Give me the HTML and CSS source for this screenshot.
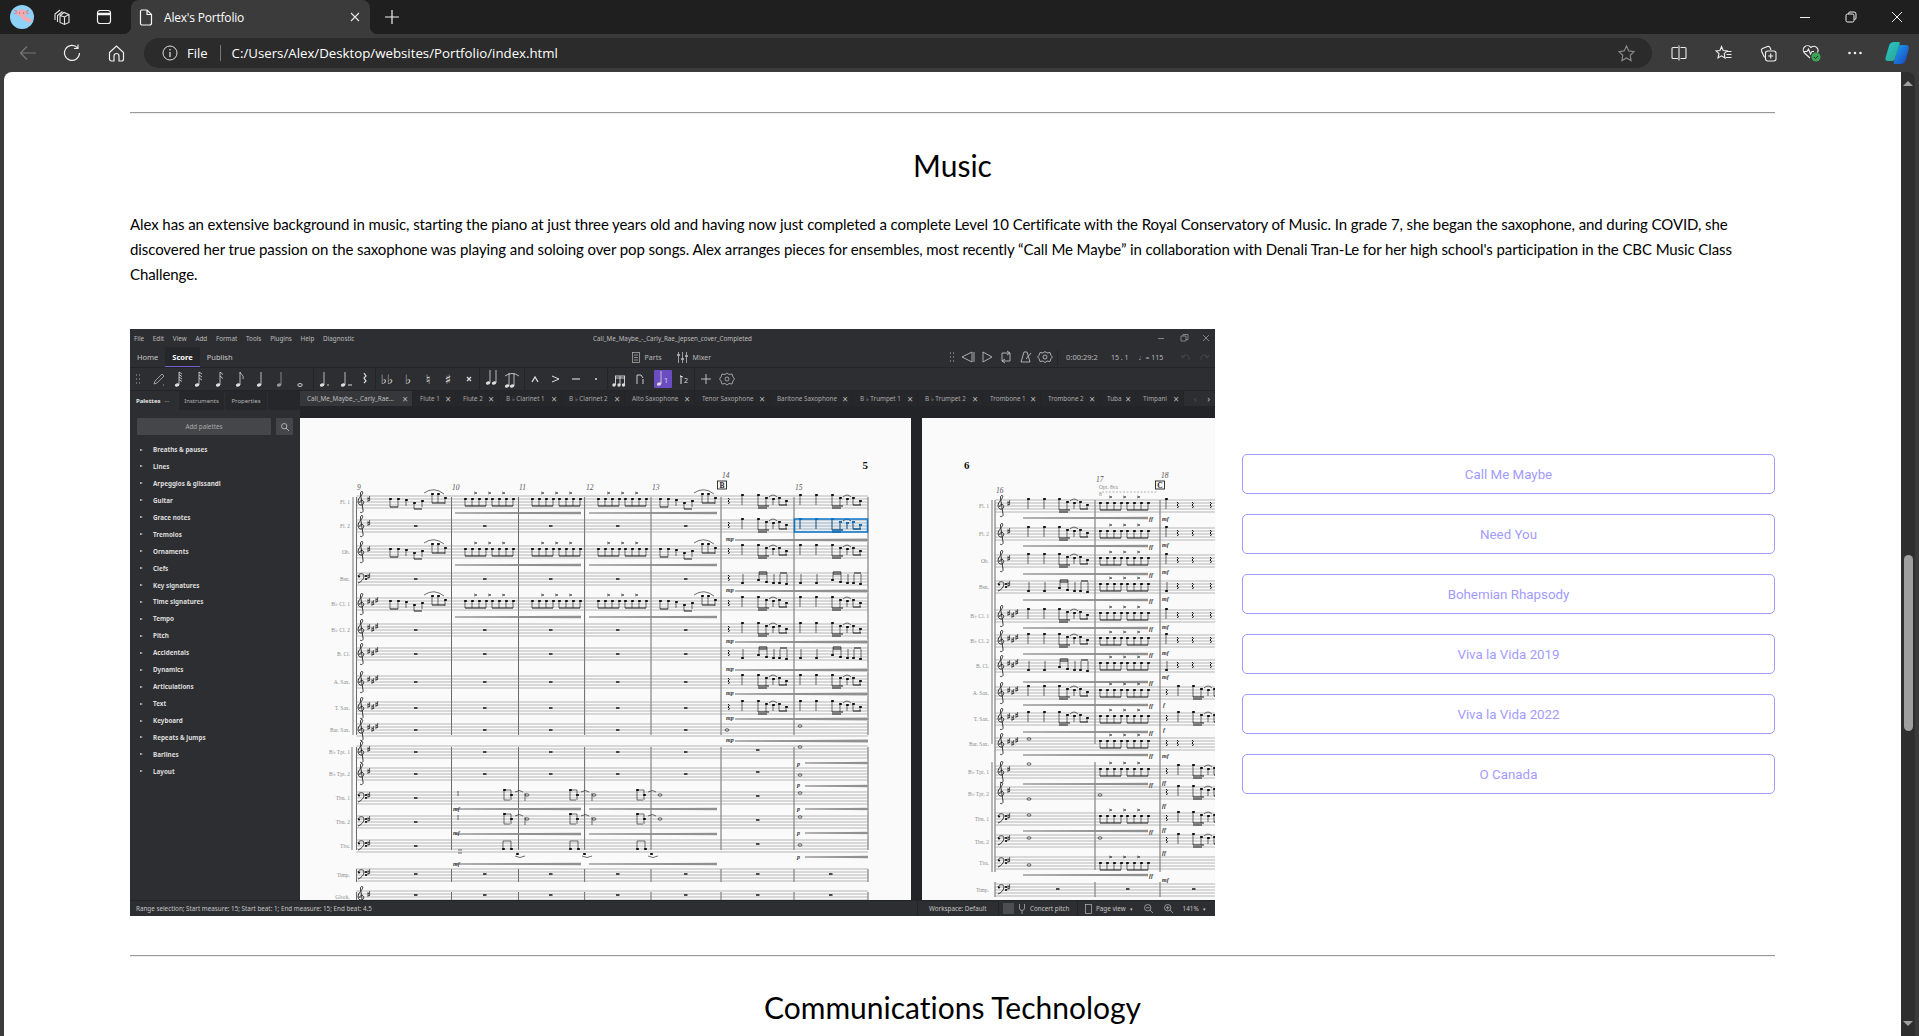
FILE: index.html
```html
<!DOCTYPE html>
<html lang="en">
<head>
    <meta charset="UTF-8">
    <meta name="viewport" content="width=device-width, initial-scale=1.0">
    <title>Alex's Portfolio</title>
    <link rel="stylesheet" href="styles.css">
</head>
<body>

<!-- browser tab strip -->
<div class="tabstrip">
    <svg class="avatar" width="24" height="24" viewBox="0 0 24 24">
        <circle cx="12" cy="12" r="12" fill="#8ed1f6"/>
        <path d="M11 8Q13 14 19.500 15.500" fill="none" stroke="#f2aab0" stroke-width="4" stroke-linecap="round"/>
        <ellipse cx="11.500" cy="8" rx="5" ry="3.500" fill="#f2aab0"/>
        <path d="M4.500 5l2.500 2M4 8.500l3-.5M18.500 5L16 7M19 8.500l-3-.5" stroke="#d9808e" stroke-width="1.200" fill="none"/>
        <path d="M9.500 8h.1M13.500 8h.1" stroke="#8a4a55" stroke-width="1.200" stroke-linecap="round"/>
    </svg>
    <svg class="ticon t-coll" width="18" height="18" viewBox="0 0 18 18" fill="none" stroke="#e6e6e6" stroke-width="1.100">
        <path d="M2 12V6l5-4M4.500 14V7.500l5-4M7 7.500l4-3 5 2v8l-4.500 2L7 14.500z M7 7.500l4.500 1.500 4.500-2.500M11.500 9v7"/>
    </svg>
    <svg class="ticon t-vert" width="16" height="16" viewBox="0 0 16 16" fill="none" stroke="#f2f2f2" stroke-width="1.200">
        <rect x="1.500" y="1.500" width="13" height="13" rx="2.500"/>
        <path d="M1.500 5h13" stroke-width="2.500"/>
    </svg>
    <div class="tab">
        <svg width="14" height="17" viewBox="0 0 14 17" fill="none" stroke="#f5f5f5" stroke-width="1.200">
            <path d="M2.500 1h5.500l4.500 4.500V14a2 2 0 0 1-2 2h-8a2 2 0 0 1-1-1.500V2.500A1.500 1.500 0 0 1 2.500 1zM8 1v4.500h4.500"/>
        </svg>
        <span class="tab-title">Alex's Portfolio</span>
        <svg class="tab-close" width="10" height="10" viewBox="0 0 10 10" stroke="#e8e8e8" stroke-width="1.100"><path d="M1 1l8 8M9 1l-8 8"/></svg>
    </div>
    <svg class="t-new" width="14" height="14" viewBox="0 0 14 14" stroke="#f2f2f2" stroke-width="1.200"><path d="M7 0v14M0 7h14"/></svg>
    <div class="winbtns">
        <svg width="12" height="12" viewBox="0 0 12 12" stroke="#eee" fill="none"><path d="M1 6.500h10"/></svg>
        <svg width="12" height="12" viewBox="0 0 12 12" stroke="#eee" fill="none"><rect x="1" y="3" width="8" height="8" rx="1.500"/><path d="M3.500 3V2.500A1.500 1.500 0 0 1 5 1h4a2 2 0 0 1 2 2v4a1.500 1.500 0 0 1-1.500 1.500H9"/></svg>
        <svg width="12" height="12" viewBox="0 0 12 12" stroke="#eee" fill="none"><path d="M1 1l10 10M11 1L1 11"/></svg>
    </div>
</div>

<!-- address bar -->
<div class="toolbar">
    <svg class="nav-back" width="18" height="16" viewBox="0 0 18 16" fill="none" stroke="#777" stroke-width="1.200"><path d="M17 8H1.500M8 1.500L1.500 8 8 14.500"/></svg>
    <svg class="nav-reload" width="18" height="18" viewBox="0 0 18 18" fill="none" stroke="#eee" stroke-width="1.200"><path d="M14.500 3.800A7.500 7.500 0 1 0 16.500 9M15 .5v4h-4"/></svg>
    <svg class="nav-home" width="17" height="17" viewBox="0 0 17 17" fill="none" stroke="#eee" stroke-width="1.200"><path d="M1.500 7.500l7-6.500 7 6.500V14a2 2 0 0 1-2 2h-2.500v-5a2 2 0 0 0-5 0v5H3.500a2 2 0 0 1-2-2z"/></svg>
    <div class="addr">
        <svg width="16" height="16" viewBox="0 0 16 16" fill="none" stroke="#ddd" stroke-width="1"><circle cx="8" cy="8" r="7"/><path d="M8 7v5M8 4v1.500" stroke-width="1.300"/></svg>
        <span class="addr-file">File</span>
        <span class="addr-sep"></span>
        <span class="addr-url">C:/Users/Alex/Desktop/websites/Portfolio/index.html</span>
        <svg class="addr-star" width="17" height="17" viewBox="0 0 17 17" fill="none" stroke="#8a8a8a" stroke-width="1.100"><path d="M8.500 1l2.300 4.900 5.200.7-3.800 3.700.9 5.300-4.600-2.600-4.600 2.600.9-5.300L1 6.600l5.200-.7z"/></svg>
    </div>
    <div class="tools">
        <svg width="16" height="16" viewBox="0 0 16 16" fill="none" stroke="#eee" stroke-width="1.100"><path d="M7 2.500H2a1 1 0 0 0-1 1v9a1 1 0 0 0 1 1h5M9.500 2.500H14a1 1 0 0 1 1 1v9a1 1 0 0 1-1 1H9.500M8 .5v15"/></svg>
        <svg width="17" height="17" viewBox="0 0 17 17" fill="none" stroke="#eee" stroke-width="1.100"><path d="M6.500 1.500l1.700 4 4 .5-3 2.700.9 4.300-3.600-2.200L3 12.900 4 8.700 1 6l4-.5zM12 6.500h4.500M11.500 9.500h5M11 12.500h5.500"/></svg>
        <svg width="17" height="17" viewBox="0 0 17 17" fill="none" stroke="#eee" stroke-width="1.100"><path d="M4.500 12.500L1.500 6a2 2 0 0 1 1-2.500l5-2a2 2 0 0 1 2.500 1L11 5"/><rect x="5.500" y="6" width="10.500" height="10" rx="2.200"/><path d="M10.700 8.500v5M8.200 11h5"/></svg>
        <svg class="tool-health" width="19" height="18" viewBox="0 0 19 18"><path d="M8 14L2.500 9A4.200 4.200 0 0 1 8.500 3l.5.500.5-.5a4.200 4.200 0 0 1 6 5.500M1.500 7.500h3.500l1.500-2.500 2 5 1.500-2.500h2" fill="none" stroke="#eee" stroke-width="1.100"/><circle cx="14" cy="13" r="4.500" fill="#3aa655"/><path d="M12 13l1.500 1.500 2.500-2.500" fill="none" stroke="#223" stroke-width="1"/></svg>
        <svg class="tool-more" width="14" height="4" viewBox="0 0 14 4" fill="#eee"><circle cx="1.500" cy="2" r="1.300"/><circle cx="7" cy="2" r="1.300"/><circle cx="12.500" cy="2" r="1.300"/></svg>
        <svg class="tool-copilot" width="24" height="22" viewBox="0 0 24 22">
            <defs>
                <linearGradient id="cp1" x1="0" y1="0" x2="1" y2="1"><stop offset="0" stop-color="#27c6d8"/><stop offset="1" stop-color="#2ea37f"/></linearGradient>
                <linearGradient id="cp2" x1="0" y1="0" x2="1" y2="1"><stop offset="0" stop-color="#1aa7e8"/><stop offset="1" stop-color="#1d3fc4"/></linearGradient>
            </defs>
            <path d="M9 0h5c1 0 1 1 .6 2L10 17c-.5 1.500-1.500 2-3 2H3c-2 0-3-1-2.500-3L4 4c.7-2.500 2.500-4 5-4z" fill="url(#cp1)"/>
            <path d="M15 3h6c2 0 3.200 1.500 2.800 3.500L21 17c-.7 3-2.500 5-5 5h-6c-1.500 0-1.500-1-1-2.500L13 6c.4-1.500 1-3 2-3z" fill="url(#cp2)"/>
        </svg>
    </div>
</div>

<div class="viewport">
    <main class="page">
        <hr class="rule">
        <h2 class="sec-title">Music</h2>
        <p class="sec-text">Alex has an extensive background in music, starting the piano at just three years old and having now just completed a complete Level 10 Certificate with the Royal Conservatory of Music. In grade 7, she began the saxophone, and during COVID, she discovered her true passion on the saxophone was playing and soloing over pop songs. Alex arranges pieces for ensembles, most recently “Call Me Maybe” in collaboration with Denali Tran-Le for her high school's participation in the CBC Music Class Challenge.</p>

        <div class="music-row">
            <!-- MuseScore window -->
            <div class="ms">
                <div class="ms-title">
                    <span>File</span><span>Edit</span><span>View</span><span>Add</span><span>Format</span><span>Tools</span><span>Plugins</span><span>Help</span><span>Diagnostic</span>
                    <span class="ms-doc">Call_Me_Maybe_-_Carly_Rae_Jepsen_cover_Completed</span>
                    <svg class="ms-win" width="52" height="10" viewBox="0 0 52 10" fill="none" stroke="#999" stroke-width=".8"><path d="M0 5.500h6M23 3h5v5h-5zM25 3V1.500h5v5h-2M45 2l6 6M51 2l-6 6" /></svg>
                </div>
                <div class="ms-nav">
                    <span class="ms-navitem">Home</span>
                    <span class="ms-navitem ms-navitem-on">Score</span>
                    <span class="ms-navitem">Publish</span>
                    <svg class="ms-parts" width="8" height="11" viewBox="0 0 8 11" fill="none" stroke="#bbb" stroke-width=".7"><rect x=".5" y=".5" width="7" height="10"/><path d="M2 3h4M2 5.500h4M2 8h4"/></svg>
                    <span class="ms-navtxt">Parts</span>
                    <svg class="ms-mixer" width="11" height="11" viewBox="0 0 11 11" fill="none" stroke="#bbb" stroke-width=".8"><path d="M1.500 0v11M5.500 0v11M9.500 0v11"/><path d="M0 3h3M4 7h3M8 4h3" stroke-width="1.500"/></svg>
                    <span class="ms-navtxt">Mixer</span>
                    <svg class="ms-trans" width="112" height="14" viewBox="0 0 112 14" fill="none" stroke="#bbb" stroke-width=".9">
                        <path d="M5 3h1M8 3h1M5 7h1M8 7h1M5 11h1M8 11h1" stroke-width="1.200"/>
                        <g transform="translate(-4 0)">
                            <path d="M31 2v10L21 7zM33 2v10"/>
                            <path d="M42 2v10l9-5z"/>
                            <path d="M61 3h8v8M66 1l3 2-3 2M69 11h-8V3M64 13l-3-2 3-2"/>
                            <path d="M80 12l3-10h3l3 10zM85 9l5-6"/>
                        </g>
                        <circle cx="100" cy="7" r="2"/><path d="M100 1.500l2 1.500 3-.5 1 3 1.500 1.500-1.500 1.500-1 3-3-.5-2 1.500-2-1.500-3 .5-1-3-1.500-1.500 1.500-1.500 1-3 3 .5z"/>
                    </svg>
                    <span class="ms-vline"></span>
                    <span class="ms-navtxt ms-time">0:00:29:2</span>
                    <span class="ms-navtxt ms-pos">15 . 1</span>
                    <span class="ms-navtxt ms-tempo">♩= 115</span>
                    <svg class="ms-undo" width="28" height="10" viewBox="0 0 28 10" fill="none" stroke="#4a4b4f" stroke-width=".9"><path d="M1 5a4 4 0 0 1 7 0v3M0 3l1.500 3L4 4M27 5a4 4 0 0 0-7 0v3M28 3l-1.500 3L24 4"/></svg>
                </div>
                <svg class="ms-tools" width="1085" height="24" viewBox="130 367 1085 24">
                    <defs>
                        <g id="ico-head"><ellipse cx="0" cy="6" rx="2.200" ry="1.700" transform="rotate(-20 0 6)"/><path d="M2 6V-7" stroke="currentColor" stroke-width=".8"/></g>
                    </defs>
                    <path d="M130 367.500H1215M130 390.500H1215" stroke="#232427"/>
                    <path d="M313.500 368V390M375.500 368V390M479.500 368V390M524.500 368V390M607.500 368V390M694.500 368V390" stroke="#232427"/>
                    <g class="ti">
                        <path d="M136 375h1M139 375h1M136 379h1M139 379h1M136 383h1M139 383h1" stroke="#aaa" stroke-width="1.200"/>
                        <path d="M154 384l1-3 7-7 2 2-7 7zM163 385h1" fill="none" stroke="#bbb" stroke-width=".8"/>
                        <use href="#ico-head" x="177" y="379"/><path d="M179 372l3 2M179 374.500l3 2M179 377l3 2M179 379.500l3 2" fill="none" stroke="#ddd" stroke-width=".8"/>
                        <use href="#ico-head" x="197" y="379"/><path d="M199 372l3 2M199 375l3 2M199 378l3 2" fill="none" stroke="#ddd" stroke-width=".8"/>
                        <use href="#ico-head" x="218" y="379"/><path d="M220 372l3 2.500M220 376l3 2.500" fill="none" stroke="#ddd" stroke-width=".8"/>
                        <use href="#ico-head" x="238" y="379"/><path d="M240 372c1 3 4 3 3 7" fill="none" stroke="#ddd" stroke-width=".8"/>
                        <use href="#ico-head" x="259" y="379"/>
                        <use href="#ico-head" x="279" y="379" class="ti-dim"/>
                        <ellipse cx="300" cy="385" rx="2.200" ry="1.500" fill="none" stroke="#ddd" stroke-width=".9"/>
                        <use href="#ico-head" x="322" y="379"/><circle cx="328" cy="385" r=".8"/>
                        <use href="#ico-head" x="343" y="379"/><path d="M348 385h4" stroke="#ddd"/>
                        <path d="M364 373l2 3-2 2 2 3-2 2" fill="none" stroke="#ddd" stroke-width="1.200"/>
                    </g>
                    <g class="tg">
                        <text x="387" y="384" text-anchor="middle">♭♭</text>
                        <text x="408" y="384" text-anchor="middle">♭</text>
                        <text x="428" y="384" text-anchor="middle">♮</text>
                        <text x="448" y="384" text-anchor="middle">♯</text>
                    </g>
                    <g class="ti">
                        <path d="M467 377l4 4M471 377l-4 4" stroke="#ddd" stroke-width="1.200"/>
                        <use href="#ico-head" x="488" y="377"/><use href="#ico-head" x="494" y="377"/>
                        <path d="M505 376q7-5 14 0" fill="none" stroke="#ddd" stroke-width=".8"/>
                        <use href="#ico-head" x="507" y="376" transform="translate(0 4)"/><use href="#ico-head" x="512" y="376" transform="translate(0 4)"/>
                        <path d="M532 382l3-5 3 5" fill="none" stroke="#ddd" stroke-width="1.300"/>
                        <path d="M552 376l7 3-7 3" fill="none" stroke="#ddd" stroke-width="1"/>
                        <path d="M572 379h8" stroke="#ddd" stroke-width="1.100"/>
                        <circle cx="596" cy="379" r="1"/>
                        <path d="M615 376h10M615 378h10M615.500 376v9M620 376v9M624.500 376v9" fill="none" stroke="#ddd" stroke-width=".9"/>
                        <circle cx="614" cy="385" r="1.700"/><circle cx="619" cy="385" r="1.700"/><circle cx="623.500" cy="385" r="1.700"/>
                        <path d="M637 384v-9h4l2 3M643 384v-5" fill="none" stroke="#ddd" stroke-width=".9"/>
                        <rect x="654" y="370" width="18" height="18" rx="1" fill="#6b4cc2"/>
                        <use href="#ico-head" x="659" y="378"/><text class="tv" x="664" y="383">1</text>
                        <path d="M680 376h1v8M680 376l3 1" fill="none" stroke="#ddd" stroke-width="1"/><text class="tv" x="684" y="383">2</text>
                        <path d="M706 374v10M701 379h10" stroke="#ccc" stroke-width=".9"/>
                        <circle cx="727" cy="379" r="2" fill="none" stroke="#bbb" stroke-width=".8"/>
                        <path d="M727 373l2 1.500 3-.5 1 3 1.500 2-1.500 2-1 3-3-.5-2 1.500-2-1.500-3 .5-1-3-1.500-2 1.500-2 1-3 3 .5z" fill="none" stroke="#bbb" stroke-width=".8"/>
                    </g>
                </svg>

                <div class="ms-body">
                    <aside class="ms-side">
                        <div class="ms-sidetabs">
                            <span class="ms-st ms-st-on">Palettes<i>···</i></span>
                            <span class="ms-st ms-st-ins">Instruments</span>
                            <span class="ms-st ms-st-pro">Properties</span>
                        </div>
                        <div class="ms-add">
                            <span class="ms-addbtn">Add palettes</span>
                            <span class="ms-search"><svg width="8" height="8" viewBox="0 0 8 8" fill="none" stroke="#ccc" stroke-width=".8"><circle cx="3.200" cy="3.200" r="2.700"/><path d="M5 5l3 3"/></svg></span>
                        </div>
                        <ul class="ms-pal">
                            <li>Breaths &amp; pauses</li>
                            <li>Lines</li>
                            <li>Arpeggios &amp; glissandi</li>
                            <li>Guitar</li>
                            <li>Grace notes</li>
                            <li>Tremolos</li>
                            <li>Ornaments</li>
                            <li>Clefs</li>
                            <li>Key signatures</li>
                            <li>Time signatures</li>
                            <li>Tempo</li>
                            <li>Pitch</li>
                            <li>Accidentals</li>
                            <li>Dynamics</li>
                            <li>Articulations</li>
                            <li>Text</li>
                            <li>Keyboard</li>
                            <li>Repeats &amp; jumps</li>
                            <li>Barlines</li>
                            <li>Layout</li>
                        </ul>
                    </aside>
                    <div class="ms-main">
                        <div class="ms-tabs">
                            <span class="mt mt-on w113">Call_Me_Maybe_-_Carly_Rae...<b>×</b></span>
                            <span class="mt w43">Flute 1<b>×</b></span>
                            <span class="mt w43">Flute 2<b>×</b></span>
                            <span class="mt w63">B ♭ Clarinet 1<b>×</b></span>
                            <span class="mt w63">B ♭ Clarinet 2<b>×</b></span>
                            <span class="mt w70">Alto Saxophone<b>×</b></span>
                            <span class="mt w75">Tenor Saxophone<b>×</b></span>
                            <span class="mt w83">Baritone Saxophone<b>×</b></span>
                            <span class="mt w65">B ♭ Trumpet 1<b>×</b></span>
                            <span class="mt w65">B ♭ Trumpet 2<b>×</b></span>
                            <span class="mt w58">Trombone 1<b>×</b></span>
                            <span class="mt w59">Trombone 2<b>×</b></span>
                            <span class="mt w36">Tuba<b>×</b></span>
                            <span class="mt w48">Timpani<b>×</b></span>
                            <span class="mt-arrows"><i>‹</i><b>›</b></span>
                        </div>
                        <div class="ms-sheets">
                            <svg class="sheet sheet1" width="611" height="482" viewBox="300 418 611 482">
                                <defs>
                                    <path id="st1" class="st" d="M356.500-6H868M356.500-3H868M356.500 0H868M356.500 3H868M356.500 6H868"/>
                                    <path id="st2" class="st" d="M995-6H1215M995-3H1215M995 0H1215M995 3H1215M995 6H1215"/>
                                    <path id="tc" class="cl" d="M2 10c1.500 1.500 3.500 0 3-2L2.500-8c-.3-2 1.500-3.500 2.200-2 .8 2-3.500 5-4.400 8-.8 3 1 5.500 3.400 5 2.400-.4 2.800-4 .6-4.600-1.600-.4-3 1-2.400 2.600"/>
                                    <g id="bc"><path class="cl" d="M0-3c1-3 6-3 6 0 0 3-3 6-6 7"/><path class="h" d="M1-2.500h.1M8-3h.1M8 0h.1"/></g>
                                    <path id="ks" class="s" d="M0-5v5M1.600-6v5M-.4-3.200l2.400-.8M-.4-1.200l2.400-.8"/>
                                    <path id="ks3" class="s" d="M0-5v5M1.600-6v5M-.4-3.200l2.400-.8M-.4-1.200l2.400-.8M4-3v5M5.600-4v5M3.600-1.200l2.400-.8M3.600.8l2.400-.8M8-6v5M9.600-7v5M7.600-4.200l2.400-.8M7.600-2.200l2.400-.8"/>
                                    <g id="t-row"><use href="#tc" x="358"/><use href="#ks" x="368"/></g>
                                    <g id="t-row3"><use href="#tc" x="358"/><use href="#ks3" x="368"/></g>
                                    <g id="b-row"><use href="#bc" x="358"/><use href="#ks" x="368"/></g>

                                    <g id="run">
                                        <path class="h" d="M0-3h1M8-3h1M16-2h1M24 1h1M32-1h1M42-8h1M48-8h1M55-4h1"/>
                                        <path class="s" d="M0-3v8M8-3v8M16-2v6M24 1v6M32-1v6M42-8v9M48-8v9M55-4v6"/>
                                        <path class="b" d="M0 5h8M24 7h8M42 1h13"/>
                                        <path class="s" d="M34-9q10-7 20 1"/>
                                    </g>
                                    <g id="e8">
                                        <path class="h" d="M0-3h1M7-3h1M14-3h1M21-3h1M27-3h1M34-3h1M41-3h1M48-3h1"/>
                                        <path class="s" d="M0-3v7M7-3v7M14-3v7M21-3v7M27-3v7M34-3v7M41-3v7M48-3v7"/>
                                        <path class="b" d="M0 4h21M27 4h21"/>
                                        <path class="s" d="M9-10l3 1-3 1M23-10l3 1-3 1M37-10l3 1-3 1"/>
                                    </g>
                                    <g id="q"><path class="h" d="M0-7h1"/><path class="s" d="M0-7v10"/></g>
                                    <g id="ql"><path class="h" d="M0 4h1"/><path class="s" d="M1 4v-9"/></g>
                                    <g id="bg">
                                        <path class="h" d="M0-7h1M8-4h1M15-3h1M21-4h1M28-1h1"/>
                                        <path class="s" d="M0-7v11M8-4v8M15-3v6M21-4v7M28-1v4M11-5q4-4 8 0"/>
                                        <path class="b" d="M0 4h11M0 6h9M21 3h8"/>
                                    </g>
                                    <g id="bgl">
                                        <path class="h" d="M0 1h1M8 3h1M15 4h1M21 4h1M28 5h1"/>
                                        <path class="s" d="M1 1v-8M9 3v-10M16 4v-9M22 4v-9M29 5v-10"/>
                                        <path class="b" d="M1-7h8M1-5h8M22-6h7"/>
                                    </g>
                                    <path id="rz" class="s sb" d="M0-4l1.400 1.500-1.400 1.500 1.400 1.500-1 1.500"/>
                                    <path id="wr" class="b2" d="M0 0h3.500"/>
                                    <g id="w"><ellipse rx="2" ry="1.200" class="wn"/></g>
                                    <g id="rests5"><use href="#wr" x="414"/><use href="#wr" x="483"/><use href="#wr" x="549"/><use href="#wr" x="616"/><use href="#wr" x="684"/></g>
                                    <g id="m15"><use href="#rz" x="728"/><use href="#q" x="742"/><use href="#bg" x="758"/><use href="#q" x="800"/><use href="#q" x="816"/><use href="#bg" x="832"/></g>
                                    <g id="m15l"><use href="#rz" x="728"/><use href="#ql" x="742"/><use href="#bgl" x="758"/><use href="#ql" x="800"/><use href="#ql" x="816"/><use href="#bgl" x="832"/></g>
                                    <g id="wave"><use href="#run" x="390"/><use href="#e8" x="465"/><use href="#e8" x="532"/><use href="#e8" x="598"/><use href="#run" x="660"/><use href="#m15"/></g>
                                    <g id="hp"><path class="hw" d="M455 0L581-1.500V1.500zM589 0L717-1.500V1.500z"/><path class="s" d="M455 0H581M589 0H717"/></g>
                                    <g id="hp15"><path class="hw" d="M735 0L868-2V2z"/><path class="s" d="M735 0H868"/></g>
                                    <g id="hpp"><path class="hw" d="M805 0L868-1.500V1.500z"/><path class="s" d="M805 0H868"/></g>
                                    <g id="tb">
                                        <path class="s" d="M458-2v-5M504-8h7M504-8v10M511-8v10M504 2h6M525-5v8M570-8h7M570-8v10M577-8v10M570 2h6M592-5v8M637-8h7M637-8v10M644-8v10M637 2h6M515-6q5-3 8 0M581-6q5-3 8 0M648-6q5-3 8 0"/>
                                        <path class="h" d="M504-8h1M511-3h1M570-8h1M577-3h1M637-8h1M644-3h1"/>
                                        <use href="#w" x="527" y="-3"/><use href="#w" x="594" y="-3"/><use href="#w" x="660" y="-3"/>
                                    </g>
                                    <g id="tu">
                                        <path class="s" d="M503 3v-8h8v8M570 3v-8h8v8M637 3v-8h8v8M515 10q5 3 10 0M582 10q5 3 10 0M648 10q5 3 10 0M458 4h4M458 7h4"/>
                                        <path class="h" d="M503 3h1M511 3h1M517 8h1M570 3h1M578 3h1M584 8h1M637 3h1M645 3h1M651 8h1"/>
                                    </g>
                                </defs>

                                <rect x="300" y="418" width="611" height="482" fill="#fafafa"/>

                                <path class="bl" d="M356.500 497V735M356.500 747V850M451.500 497V735M518.500 497V735M584.600 497V735M651 497V735M721 497V735M794 497V735M868 497V735M451.500 747V850M518.500 747V850M584.600 747V850M651 747V850M721 747V850M794 747V850M868 747V850M356.500 869V882M451.500 869V882M518.500 869V882M584.600 869V882M651 869V882M721 869V882M794 869V882M868 869V882M356.500 892V900M451.500 892V900M518.500 892V900M584.600 892V900M651 892V900M721 892V900M794 892V900M868 892V900"/>
                                <path class="brk" d="M353 497V735M352 747V850"/>

                                <text class="pn" x="868" y="469" text-anchor="end">5</text>
                                <g class="mn">
                                    <text x="357" y="490">9</text><text x="452" y="490">10</text><text x="519" y="490">11</text><text x="586" y="490">12</text><text x="652" y="490">13</text><text x="722" y="478">14</text><text x="795" y="490">15</text>
                                </g>
                                <rect class="rm" x="717.500" y="481" width="9" height="8"/><text class="rmt" x="722" y="488" text-anchor="middle">B</text>

                                <g class="lab" text-anchor="end">
                                    <text x="350" y="504">Fl. 1</text><text x="350" y="528">Fl. 2</text><text x="350" y="554">Ob.</text><text x="350" y="581">Bsn.</text>
                                    <text x="350" y="606">B♭ Cl. 1</text><text x="350" y="632">B♭ Cl. 2</text><text x="350" y="656">B. Cl.</text><text x="350" y="684">A. Sax.</text>
                                    <text x="350" y="710">T. Sax.</text><text x="350" y="732">Bar. Sax.</text><text x="350" y="754">B♭ Tpt. 1</text><text x="350" y="776">B♭ Tpt. 2</text>
                                    <text x="350" y="800">Tbn. 1</text><text x="350" y="824">Tbn. 2</text><text x="350" y="848">Tba.</text><text x="350" y="877">Timp.</text><text x="350" y="899">Glock.</text>
                                </g>

                                <use href="#st1" y="502"/><use href="#t-row" y="502"/><use href="#wave" y="502"/><use href="#hp" y="513"/>
                                <use href="#st1" y="526"/><use href="#t-row" y="526"/><use href="#rests5" y="526"/>
                                <use href="#m15" y="526" x="0"/>
                                <use href="#hp15" y="540"/><text class="dyn" x="726" y="541">mp</text>
                                <use href="#st1" y="552"/><use href="#t-row" y="552"/><use href="#wave" y="552"/><use href="#hp" y="565"/>
                                <use href="#st1" y="579"/><use href="#b-row" y="579"/><use href="#rests5" y="579"/><use href="#m15l" y="579"/>
                                <use href="#hp15" y="591"/><text class="dyn" x="726" y="592">mp</text>
                                <use href="#st1" y="604"/><use href="#t-row3" y="604"/><use href="#wave" y="604"/><use href="#hp" y="617"/>
                                <use href="#st1" y="630"/><use href="#t-row3" y="630"/><use href="#rests5" y="630"/><use href="#m15" y="630"/>
                                <use href="#hp15" y="642"/><text class="dyn" x="726" y="643">mp</text>
                                <use href="#st1" y="654"/><use href="#t-row3" y="654"/><use href="#rests5" y="654"/><use href="#m15l" y="654"/>
                                <use href="#hp15" y="670"/><text class="dyn" x="726" y="671">mp</text>
                                <use href="#st1" y="682"/><use href="#t-row3" y="682"/><use href="#rests5" y="682"/><use href="#m15" y="682"/>
                                <use href="#hp15" y="694"/><text class="dyn" x="726" y="695">mp</text>
                                <use href="#st1" y="708"/><use href="#t-row3" y="708"/><use href="#rests5" y="708"/><use href="#m15" y="708"/>
                                <use href="#hp15" y="719"/><text class="dyn" x="726" y="720">mp</text>
                                <use href="#st1" y="730"/><use href="#t-row3" y="730"/><use href="#rests5" y="730"/><use href="#w" x="727" y="730"/><use href="#w" x="800" y="726"/>
                                <use href="#hp15" y="741"/><text class="dyn" x="726" y="742">mp</text>
                                <use href="#st1" y="752"/><use href="#t-row" y="752"/><use href="#rests5" y="752"/><use href="#wr" x="756" y="750"/><use href="#w" x="800" y="747"/>
                                <use href="#hpp" y="763"/><text class="dyn" x="797" y="766">p</text>
                                <use href="#st1" y="774"/><use href="#t-row" y="774"/><use href="#rests5" y="774"/><use href="#wr" x="756" y="772"/><use href="#w" x="800" y="775"/>
                                <use href="#hpp" y="786"/><text class="dyn" x="797" y="787">p</text>
                                <use href="#st1" y="798"/><use href="#b-row" y="798"/><use href="#wr" x="414" y="798"/><use href="#tb" y="798"/><use href="#wr" x="756" y="796"/><use href="#w" x="800" y="793"/>
                                <use href="#hp" y="809"/><text class="dyn" x="453" y="811">mf</text><use href="#hpp" y="809"/><text class="dyn" x="797" y="811">p</text>
                                <use href="#st1" y="822"/><use href="#b-row" y="822"/><use href="#wr" x="414" y="822"/><use href="#tb" y="822"/><use href="#wr" x="756" y="820"/><use href="#w" x="800" y="817"/>
                                <use href="#hp" y="834"/><text class="dyn" x="453" y="835">mf</text><use href="#hpp" y="833"/><text class="dyn" x="797" y="835">p</text>
                                <use href="#st1" y="846"/><use href="#b-row" y="846"/><use href="#wr" x="414" y="846"/><use href="#tu" y="846"/><use href="#wr" x="756" y="844"/><use href="#w" x="800" y="845"/>
                                <use href="#hp" y="864"/><text class="dyn" x="453" y="866">mf</text><use href="#hpp" y="857"/><text class="dyn" x="797" y="859">p</text>
                                <use href="#st1" y="875"/><use href="#b-row" y="875"/><use href="#rests5" y="874"/><use href="#wr" x="756" y="874"/><use href="#wr" x="829" y="874"/>
                                <use href="#st1" y="897"/><use href="#t-row" y="897"/><use href="#rests5" y="895"/><use href="#wr" x="756" y="895"/><use href="#wr" x="829" y="895"/>

                                <!-- selected measure -->
                                <rect class="sel" x="794.500" y="519" width="73" height="13"/>
                                <g class="sel-notes"><use href="#q" x="800" y="526"/><use href="#q" x="816" y="526"/><use href="#bg" x="832" y="526"/></g>
                            </svg>

                            <svg class="sheet sheet2" width="293" height="482" viewBox="922 418 293 482">
                                <defs>
                                    <g id="w16"><use href="#q" x="1028"/><use href="#q" x="1044"/><use href="#bg" x="1059"/><use href="#e8" x="1100"/><use href="#q" x="1166"/><use href="#rz" x="1177"/><use href="#rz" x="1192"/><use href="#rz" x="1210"/></g>
                                    <g id="l16"><use href="#ql" x="1028"/><use href="#ql" x="1044"/><use href="#bgl" x="1059"/><use href="#e8" x="1100"/><use href="#ql" x="1166"/><use href="#rz" x="1177"/><use href="#rz" x="1192"/><use href="#rz" x="1210"/></g>
                                    <g id="end18"><use href="#rz" x="1166"/><use href="#q" x="1178"/><use href="#bg" x="1193"/></g>
                                    <g id="hp2"><path class="hw" d="M1023 0L1148-1.500V1.500z"/><path class="s" d="M1023 0H1148"/></g>
                                </defs>
                                <rect x="922" y="418" width="293" height="482" fill="#fafafa"/>
                                <path class="bl" d="M995 500V872M1095 500V744M1095 762V870M1160 500V872M995 882V897M1095 882V897M1160 882V897"/>
                                <path class="brk" d="M992 500V744M992 762V872"/>

                                <text class="pn" x="964" y="469">6</text>
                                <g class="mn"><text x="996" y="493">16</text><text x="1096" y="482">17</text><text x="1161" y="478">18</text></g>
                                <rect class="rm" x="1155.500" y="481" width="9" height="8"/><text class="rmt" x="1160" y="488" text-anchor="middle">C</text>
                                <text class="lab" x="1099" y="489">Opt. 8va</text>
                                <path class="dash" d="M1102 492H1158"/>
                                <text class="lab" x="1099" y="496">8</text>

                                <g class="lab" text-anchor="end">
                                    <text x="989" y="508">Fl. 1</text><text x="989" y="536">Fl. 2</text><text x="989" y="563">Ob.</text><text x="989" y="589">Bsn.</text>
                                    <text x="989" y="618">B♭ Cl. 1</text><text x="989" y="643">B♭ Cl. 2</text><text x="989" y="668">B. Cl.</text><text x="989" y="695">A. Sax.</text>
                                    <text x="989" y="721">T. Sax.</text><text x="989" y="746">Bar. Sax.</text><text x="989" y="774">B♭ Tpt. 1</text><text x="989" y="796">B♭ Tpt. 2</text>
                                    <text x="989" y="821">Tbn. 1</text><text x="989" y="844">Tbn. 2</text><text x="989" y="865">Tba.</text><text x="989" y="892">Timp.</text>
                                </g>

                                <use href="#st2" y="506"/><use href="#tc" x="998" y="506"/><use href="#ks" x="1008" y="506"/><use href="#w16" y="506"/><use href="#hp2" y="518"/><text class="dyn" x="1149" y="521">ff</text><text class="dyn" x="1162" y="521">mf</text>
                                <use href="#st2" y="534"/><use href="#tc" x="998" y="534"/><use href="#ks" x="1008" y="534"/><use href="#w16" y="534"/><use href="#hp2" y="546"/><text class="dyn" x="1149" y="549">ff</text><text class="dyn" x="1162" y="547">mf</text>
                                <use href="#st2" y="561"/><use href="#tc" x="998" y="561"/><use href="#ks" x="1008" y="561"/><use href="#w16" y="561"/><use href="#hp2" y="574"/><text class="dyn" x="1149" y="577">ff</text><text class="dyn" x="1162" y="574">mf</text>
                                <use href="#st2" y="587"/><use href="#bc" x="998" y="587"/><use href="#ks" x="1008" y="587"/><use href="#l16" y="587"/><use href="#hp2" y="600"/><text class="dyn" x="1149" y="603">ff</text><text class="dyn" x="1162" y="601">mf</text>
                                <use href="#st2" y="616"/><use href="#tc" x="998" y="616"/><use href="#ks3" x="1008" y="616"/><use href="#w16" y="616"/><use href="#hp2" y="628"/><text class="dyn" x="1149" y="631">ff</text><text class="dyn" x="1162" y="629">mf</text>
                                <use href="#st2" y="641"/><use href="#tc" x="998" y="641"/><use href="#ks3" x="1008" y="641"/><use href="#w16" y="641"/><use href="#hp2" y="654"/><text class="dyn" x="1149" y="657">ff</text><text class="dyn" x="1162" y="655">mf</text>
                                <use href="#st2" y="666"/><use href="#tc" x="998" y="666"/><use href="#ks3" x="1008" y="666"/><use href="#l16" y="666"/><use href="#hp2" y="682"/><text class="dyn" x="1149" y="685">ff</text><text class="dyn" x="1162" y="679">mf</text>
                                <use href="#st2" y="693"/><use href="#tc" x="998" y="693"/><use href="#ks3" x="1008" y="693"/><use href="#q" x="1028" y="693"/><use href="#q" x="1044" y="693"/><use href="#bg" x="1059" y="693"/><use href="#e8" x="1100" y="693"/><use href="#end18" y="693"/><use href="#hp2" y="705"/><text class="dyn" x="1149" y="708">ff</text><text class="dyn" x="1163" y="707">f</text>
                                <use href="#st2" y="719"/><use href="#tc" x="998" y="719"/><use href="#ks3" x="1008" y="719"/><use href="#q" x="1028" y="719"/><use href="#q" x="1044" y="719"/><use href="#bg" x="1059" y="719"/><use href="#e8" x="1100" y="719"/><use href="#end18" y="719"/><use href="#hp2" y="732"/><text class="dyn" x="1149" y="735">ff</text><text class="dyn" x="1163" y="732">f</text>
                                <use href="#st2" y="744"/><use href="#tc" x="998" y="744"/><use href="#ks3" x="1008" y="744"/><use href="#w" x="1029" y="739"/><use href="#e8" x="1100" y="744"/><use href="#rz" x="1166" y="744"/><use href="#rz" x="1177" y="744"/><use href="#rz" x="1192" y="744"/><use href="#hp2" y="755"/><text class="dyn" x="1149" y="758">ff</text><text class="dyn" x="1162" y="758">mf</text>
                                <use href="#st2" y="772"/><use href="#tc" x="998" y="772"/><use href="#ks" x="1008" y="772"/><use href="#w" x="1029" y="764"/><use href="#e8" x="1100" y="772"/><use href="#end18" y="772"/><use href="#hp2" y="784"/><text class="dyn" x="1149" y="787">ff</text><text class="dyn" x="1162" y="785">ff</text>
                                <use href="#st2" y="793"/><use href="#tc" x="998" y="793"/><use href="#ks" x="1008" y="793"/><use href="#w" x="1029" y="799"/><use href="#w" x="1100" y="795"/><use href="#end18" y="793"/><text class="dyn" x="1162" y="808">ff</text>
                                <use href="#st2" y="819"/><use href="#bc" x="998" y="819"/><use href="#ks" x="1008" y="819"/><use href="#w" x="1029" y="815"/><use href="#e8" x="1100" y="819"/><use href="#end18" y="819"/><use href="#hp2" y="831"/><text class="dyn" x="1149" y="834">ff</text><text class="dyn" x="1162" y="832">ff</text>
                                <use href="#st2" y="841"/><use href="#bc" x="998" y="841"/><use href="#ks" x="1008" y="841"/><use href="#w" x="1029" y="838"/><use href="#w" x="1100" y="838"/><use href="#end18" y="841"/><text class="dyn" x="1162" y="855">ff</text>
                                <use href="#st2" y="863"/><use href="#bc" x="998" y="863"/><use href="#ks" x="1008" y="863"/><use href="#w" x="1029" y="865"/><use href="#e8" x="1100" y="866"/><use href="#hp2" y="875"/><text class="dyn" x="1149" y="878">ff</text><text class="dyn" x="1162" y="882">mf</text>
                                <use href="#st2" y="890"/><use href="#bc" x="998" y="890"/><use href="#ks" x="1008" y="890"/><use href="#wr" x="1056" y="889"/><use href="#wr" x="1126" y="889"/><use href="#wr" x="1192" y="889"/>
                            </svg>
                        </div>
                    </div>
                </div>

                <div class="ms-status">
                    <span class="ms-range">Range selection; Start measure: 15; Start beat: 1; End measure: 15; End beat: 4.5</span>
                    <span class="ms-sb ms-work">Workspace: Default</span>
                    <span class="ms-sb ms-concert">
                        <i class="ms-sq"></i>
                        <svg width="6" height="10" viewBox="0 0 6 10" fill="none" stroke="#bbb" stroke-width=".7"><path d="M.5 0v4a2.500 2.500 0 0 0 5 0V0M3 6.500V10"/></svg>
                        Concert pitch
                    </span>
                    <span class="ms-sb ms-view">
                        <svg width="7" height="10" viewBox="0 0 7 10" fill="none" stroke="#bbb" stroke-width=".7"><rect x=".5" y=".5" width="6" height="9"/></svg>
                        Page view <em>▾</em>
                        <svg class="ms-zoom" width="9" height="9" viewBox="0 0 9 9" fill="none" stroke="#bbb" stroke-width=".7"><circle cx="3.700" cy="3.700" r="3.200"/><path d="M6 6l3 3M2 3.700h3.500"/></svg>
                        <svg class="ms-zoom" width="9" height="9" viewBox="0 0 9 9" fill="none" stroke="#bbb" stroke-width=".7"><circle cx="3.700" cy="3.700" r="3.200"/><path d="M6 6l3 3M2 3.700h3.500M3.700 2v3.500"/></svg>
                        <span class="ms-pct">141%</span> <em>▾</em>
                    </span>
                </div>
            </div>

            <div class="songs">
                <a class="song">Call Me Maybe</a>
                <a class="song">Need You</a>
                <a class="song">Bohemian Rhapsody</a>
                <a class="song">Viva la Vida 2019</a>
                <a class="song">Viva la Vida 2022</a>
                <a class="song">O Canada</a>
            </div>
        </div>

        <hr class="rule rule-next">
        <h2 class="sec-title sec-title-next">Communications Technology</h2>
    </main>

    <div class="scrollbar">
        <i class="arrow-up"></i>
        <i class="thumb"></i>
        <i class="arrow-down"></i>
    </div>
</div>

</body>
</html>
```

FILE: styles.css
```css
html, body {
    margin: 0;
    padding: 0;
    height: 1036px;
    overflow: hidden;
}

body {
    background-color: #3b3b3b;
    font-family: "Open Sans", "Noto Sans", sans-serif;
    color: #fff;
}

/* browser tab strip */
.tabstrip {
    display: flex;
    align-items: center;
    height: 34px;
    background-color: #1f1f1f;
}

.avatar {
    margin-left: 10px;
    flex: none;
}

.t-coll {
    margin-left: 19px;
}

.t-vert {
    margin-left: 25px;
}

.tab {
    position: relative;
    display: flex;
    align-items: center;
    align-self: stretch;
    box-sizing: border-box;
    width: 239px;
    margin-left: 19px;
    padding-left: 8px;
    background-color: #3b3b3b;
    border-radius: 8px 8px 0 0;
}

.tab::before,
.tab::after {
    content: "";
    position: absolute;
    bottom: 0;
    width: 8px;
    height: 8px;
    background: #3b3b3b;
}

.tab::before {
    left: -8px;
    -webkit-mask: radial-gradient(circle at 0 0, transparent 8px, #000 8.5px);
}

.tab::after {
    right: -8px;
    -webkit-mask: radial-gradient(circle at 100% 0, transparent 8px, #000 8.5px);
}

.tab-title {
    margin-left: 11px;
    font-size: 12px;
    letter-spacing: -0.2px;
}

.tab-close {
    margin-left: auto;
    margin-right: 10px;
}

.t-new {
    margin-left: 15px;
}

.winbtns {
    display: flex;
    gap: 34px;
    margin-left: auto;
    margin-right: 16px;
}

/* address bar */
.toolbar {
    display: flex;
    align-items: center;
    height: 38px;
}

.nav-back {
    margin-left: 19px;
}

.nav-reload {
    margin-left: 26px;
}

.nav-home {
    margin-left: 27px;
}

.addr {
    display: flex;
    align-items: center;
    box-sizing: border-box;
    width: 1508px;
    height: 30px;
    margin-left: 19px;
    padding-left: 18px;
    background-color: #2b2b2b;
    border-radius: 15px;
}

.addr-file {
    margin-left: 9px;
    font-size: 13px;
}

.addr-sep {
    width: 1px;
    height: 16px;
    margin: 0 11px 0 12px;
    background-color: #777;
}

.addr-url {
    font-size: 13.25px;
}

.addr-star {
    margin-left: auto;
    margin-right: 17px;
}

.tools {
    display: flex;
    align-items: center;
    gap: 28px;
    margin-left: 19px;
}

.tool-health {
    margin-left: -3px;
}

.tool-more {
    margin-left: -1px;
}

.tool-copilot {
    margin-left: -5px;
    flex: none;
}

/* page */
.viewport {
    display: flex;
    height: 964px;
}

.page {
    flex: 1;
    box-sizing: border-box;
    margin-left: 4px;
    padding: 40px 126px 0;
    overflow: hidden;
    background-color: #fff;
    border-radius: 8px 0 0 0;
    color: #000;
    font-family: Lato, sans-serif;
    font-variant-ligatures: none;
}

.rule {
    height: 0;
    margin: 0;
    border: 0;
    border-top: 1px solid #999;
    border-bottom: 1px solid #eee;
}

.rule-next {
    margin-top: 39px;
}

.sec-title {
    margin: 32px 0 0;
    font-size: 30px;
    font-weight: 400;
    line-height: 38px;
    text-align: center;
}

.sec-title-next {
    margin-top: 31px;
}

.sec-text {
    margin: 28px 0 0;
    font-size: 15px;
    line-height: 25px;
    letter-spacing: -0.09px;
}

.music-row {
    display: flex;
    align-items: center;
    gap: 27px;
    margin-top: 42px;
}

.songs {
    flex: 1;
    display: flex;
    flex-direction: column;
    gap: 20px;
    margin-top: 3px;
}

.song {
    display: flex;
    align-items: center;
    justify-content: center;
    height: 40px;
    box-sizing: border-box;
    border: 1px solid #a29bfe;
    border-radius: 5px;
    color: #a29bfe;
    font-family: Roboto, sans-serif;
    font-size: 13.33px;
}

/* scrollbar */
.scrollbar {
    display: flex;
    flex-direction: column;
    align-items: center;
    flex: none;
    width: 14px;
    margin-right: 4px;
    background-color: #2e2e2e;
    border-radius: 0 8px 0 0;
}

.arrow-up,
.arrow-down {
    width: 0;
    height: 0;
    border-left: 5px solid transparent;
    border-right: 5px solid transparent;
}

.arrow-up {
    margin-top: 9px;
    border-bottom: 5px solid #9f9f9f;
}

.arrow-down {
    margin-top: 290px;
    border-top: 5px solid #9f9f9f;
}

.thumb {
    width: 9px;
    height: 176px;
    margin-top: 469px;
    background-color: #9f9f9f;
    border-radius: 5px;
}

/* MuseScore window */
.ms {
    flex: none;
    display: flex;
    flex-direction: column;
    width: 1085px;
    height: 587px;
    background-color: #2d2e31;
    color: #d4d4d4;
    font-family: "Noto Sans", sans-serif;
    font-size: 6.3px;
}

.ms-title {
    position: relative;
    display: flex;
    align-items: center;
    gap: 8.75px;
    flex: none;
    height: 18px;
    padding-left: 4px;
}

.ms-title span {
    color: #bdbdbd;
}

.ms-title .ms-doc {
    position: absolute;
    left: 0;
    right: 0;
    text-align: center;
}

.ms-win {
    margin-left: auto;
    margin-right: 5px;
}

.ms-nav {
    display: flex;
    align-items: center;
    flex: none;
    height: 20px;
}

.ms-navitem {
    display: flex;
    align-items: center;
    align-self: stretch;
    padding: 0 7px;
    font-size: 7.5px;
    color: #c8c8c8;
}

.ms-navitem-on {
    box-sizing: border-box;
    background-color: #26272a;
    border-bottom: 1px solid #7a5cd0;
    color: #fff;
    font-weight: 700;
}

.ms-parts {
    margin-left: 392px;
}

.ms-navtxt {
    margin-left: 5px;
    font-size: 7px;
    color: #b9b9b9;
}

.ms-mixer {
    margin-left: 15px;
}

.ms-trans {
    margin-left: 234px;
    flex: none;
}

.ms-vline {
    width: 1px;
    height: 15px;
    margin-left: 0;
    background-color: #232427;
}

.ms-nav .ms-time {
    margin-left: 8px;
    font-size: 7.5px;
}

.ms-nav .ms-pos {
    margin-left: 13px;
}

.ms-nav .ms-tempo {
    margin-left: 10px;
}

.ms-undo {
    margin-left: 18px;
}

.ms-tools {
    display: block;
    flex: none;
}

.ti {
    color: #ddd;
    fill: #ddd;
}

.ti-dim {
    opacity: 0.6;
}

.tg text {
    fill: #e8e8e8;
    font-family: "DejaVu Sans", sans-serif;
    font-size: 13px;
}

.tv {
    fill: #ddd;
    font-size: 7px;
    font-family: "Noto Sans", sans-serif;
}

.ms-body {
    flex: 1;
    display: flex;
    min-height: 0;
}

.ms-side {
    flex: none;
    width: 170px;
}

.ms-sidetabs {
    display: flex;
    height: 19px;
    background-color: #26272a;
}

.ms-st {
    display: flex;
    align-items: center;
    justify-content: center;
    box-sizing: border-box;
    border-right: 1px solid #2d2e31;
    color: #b3b3b3;
    font-size: 6px;
}

.ms-st-on {
    justify-content: flex-start;
    width: 49px;
    padding-left: 6px;
    background-color: #2d2e31;
    color: #e6e6e6;
    font-weight: 700;
}

.ms-st-ins {
    width: 46px;
}

.ms-st-pro {
    width: 43px;
}

.ms-st-on i {
    margin-left: 4px;
    font-style: normal;
    font-weight: 400;
}

.ms-add {
    display: flex;
    gap: 5px;
    margin: 8px 7px 0;
}

.ms-addbtn {
    display: flex;
    align-items: center;
    justify-content: center;
    width: 134px;
    height: 17px;
    background-color: #45464a;
    border-radius: 1px;
    color: #a8a8a8;
}

.ms-search {
    display: flex;
    align-items: center;
    justify-content: center;
    width: 17px;
    height: 17px;
    background-color: #45464a;
    border-radius: 1px;
}

.ms-pal {
    margin: 7px 0 0;
    padding: 0;
    list-style: none;
}

.ms-pal li {
    position: relative;
    height: 16.95px;
    padding-left: 23px;
    line-height: 16px;
    font-weight: 700;
    color: #dcdcdc;
}

.ms-pal li::before {
    content: "";
    position: absolute;
    left: 10px;
    top: 6.5px;
    border-left: 3px solid #cfcfcf;
    border-top: 1.5px solid transparent;
    border-bottom: 1.5px solid transparent;
}

.ms-main {
    flex: 1;
    min-width: 0;
    display: flex;
    flex-direction: column;
    background-color: #232427;
}

.ms-tabs {
    display: flex;
    flex: none;
    height: 15px;
    background-color: #2d2e31;
}

.mt {
    display: flex;
    align-items: center;
    justify-content: space-between;
    box-sizing: border-box;
    padding: 0 4px 0 7px;
    border-right: 1px solid #232427;
    background-color: #26272a;
    color: #a9a9a9;
    white-space: nowrap;
}

.mt b {
    margin-left: 3px;
    font-size: 10px;
    font-weight: 400;
    color: #b5b5b5;
}

.mt-on {
    background-color: #36373b;
    color: #bfbfbf;
}

.w113 { width: 113px; }
.w43 { width: 43px; }
.w63 { width: 63px; }
.w70 { width: 70px; }
.w75 { width: 75px; }
.w83 { width: 83px; }
.w65 { width: 65px; }
.w58 { width: 58px; }
.w59 { width: 59px; }
.w36 { width: 36px; }
.w48 { width: 48px; }

.mt-arrows {
    display: flex;
    justify-content: space-between;
    align-items: center;
    flex: 1;
    padding: 0 5px 0 10px;
    font-size: 9px;
}

.mt-arrows i {
    font-style: normal;
    color: #55565a;
}

.mt-arrows b {
    font-weight: 400;
    color: #c5c5c5;
}

.ms-sheets {
    display: flex;
    justify-content: space-between;
    margin-top: 12px;
    flex: 1;
    min-height: 0;
}

.sheet {
    display: block;
    flex: none;
    color: #111;
}

.st {
    fill: none;
    stroke: #8a8a8a;
    stroke-width: 0.6;
}

.cl {
    fill: none;
    stroke: #222;
    stroke-width: 0.9;
}

.h {
    fill: none;
    stroke: currentColor;
    stroke-width: 2.2;
    stroke-linecap: round;
}

.s {
    fill: none;
    stroke: currentColor;
    stroke-width: 0.6;
}

.sb {
    stroke-width: 1;
}

.b {
    fill: none;
    stroke: currentColor;
    stroke-width: 1;
}

.b2 {
    fill: none;
    stroke: #222;
    stroke-width: 1.6;
}

.wn {
    fill: none;
    stroke: #222;
    stroke-width: 0.7;
}

.hw {
    fill: #c8c8c8;
}

.bl {
    fill: none;
    stroke: #444;
    stroke-width: 0.8;
}

.brk {
    fill: none;
    stroke: #777;
    stroke-width: 1;
}

.pn {
    fill: #111;
    font: 700 11px "Liberation Serif", serif;
}

.mn {
    fill: #555;
    font: italic 7.5px "Liberation Serif", serif;
}

.rm {
    fill: none;
    stroke: #222;
    stroke-width: 0.9;
}

.rmt {
    fill: #222;
    font: 700 7.5px "Liberation Serif", serif;
}

.lab {
    fill: #8c8c8c;
    font: 5.5px "Liberation Serif", serif;
}

.dyn {
    fill: #333;
    font: italic 700 6px "Liberation Serif", serif;
}

.dash {
    fill: none;
    stroke: #888;
    stroke-width: 0.6;
    stroke-dasharray: 2 1.5;
}

.sel {
    fill: rgba(14, 118, 200, 0.08);
    stroke: #0e76c8;
    stroke-width: 1.5;
}

.sel-notes {
    color: #0e76c8;
}

.ms-status {
    display: flex;
    align-items: center;
    flex: none;
    height: 16px;
    border-top: 1px solid #232427;
    box-sizing: border-box;
    color: #c4c4c4;
}

.ms-range {
    margin-left: 6px;
    width: 781px;
}

.ms-sb {
    display: flex;
    align-items: center;
    align-self: stretch;
    border-left: 1px solid #232427;
}

.ms-work {
    padding-left: 11px;
    width: 69px;
}

.ms-concert {
    gap: 5px;
    padding-left: 4px;
    width: 74px;
}

.ms-sq {
    width: 11px;
    height: 11px;
    background-color: #4d4e52;
}

.ms-view {
    gap: 4px;
    padding-left: 7px;
}

.ms-view em {
    font-style: normal;
    font-size: 5px;
}

.ms-zoom {
    margin-left: 7px;
}

.ms-pct {
    margin-left: 6px;
}
```
